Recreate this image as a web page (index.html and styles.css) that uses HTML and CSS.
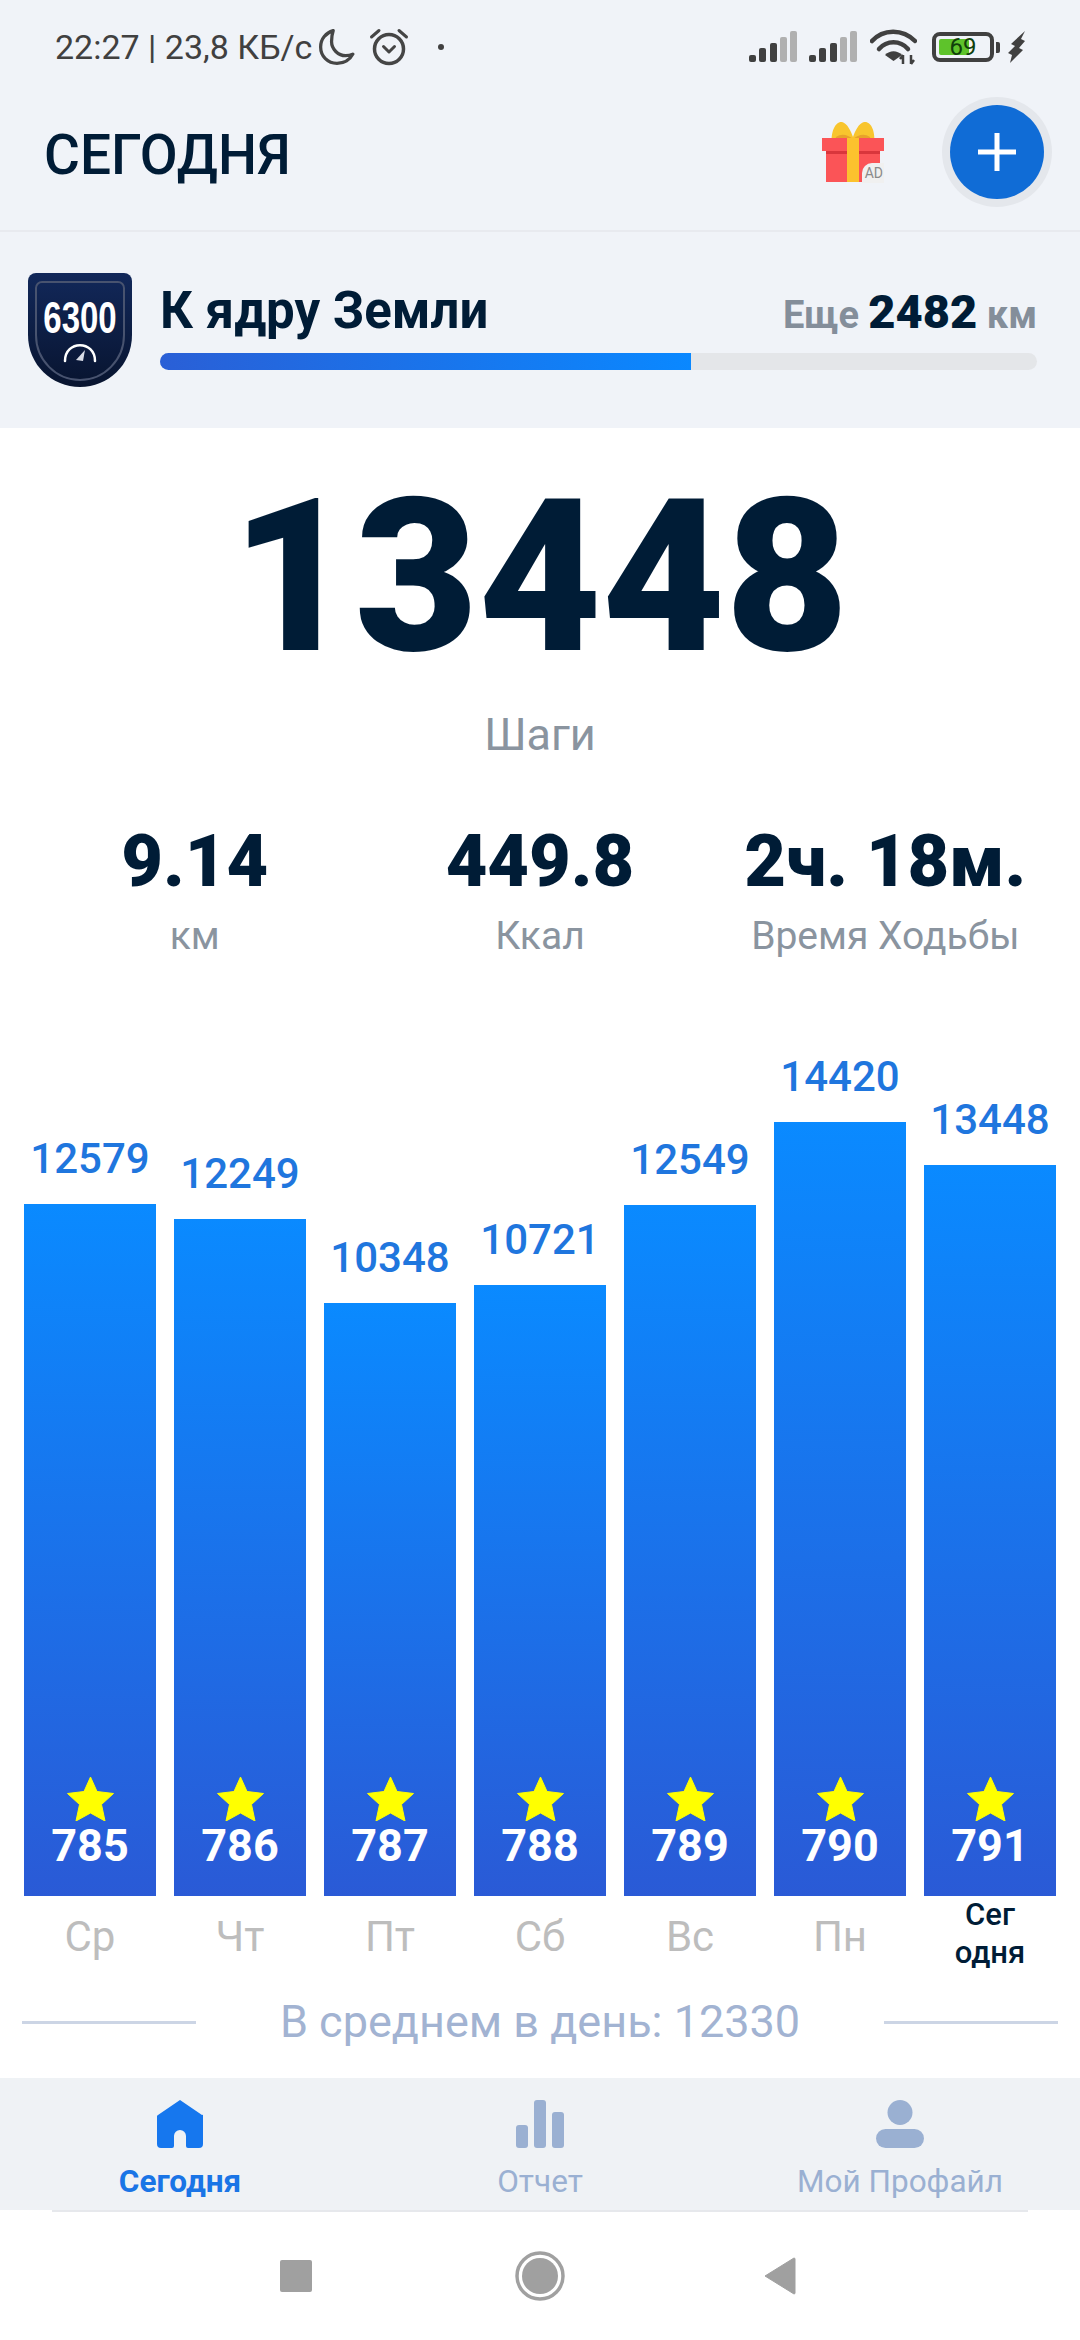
FILE: index.html
```html
<!DOCTYPE html>
<html lang="ru">
<head>
    <meta charset="UTF-8">
    <meta name="viewport" content="width=device-width, initial-scale=1.0">
    <title>Сегодня</title>
    <link rel="stylesheet" href="styles.css">
</head>
<body>
    <!-- status bar -->
    <div class="statusbar">
        <div class="status-left">
            <span class="status-text">22:27 | 23,8 КБ/с</span>
            <svg class="ic-moon" width="36" height="36" viewBox="2 2 33 33"><path d="M15 3.500C8.500 5.500 3.500 11 3.500 18.500 3.500 27 10 33.500 18.500 33.500 25 33.500 30.500 30 33 25 31 26 29 26.500 26.500 26.500 19.500 26.500 13.500 20.500 13.500 13.500 13.500 10 14 6.500 15 3.500Z" fill="none" stroke="#454545" stroke-width="3" stroke-linejoin="round"/></svg>
            <svg class="ic-alarm" width="40" height="38" viewBox="0 0 40 38"><circle cx="20" cy="21" r="14.500" fill="none" stroke="#454545" stroke-width="3.500"/><path d="M14.500 18.500 20 24l5.500-5.500" fill="none" stroke="#454545" stroke-width="3" stroke-linecap="round" stroke-linejoin="round"/><path d="M2.500 9 10 2.500M37.500 9 30 2.500" fill="none" stroke="#454545" stroke-width="3" stroke-linecap="round"/></svg>
            <span class="status-dot"></span>
        </div>
        <div class="status-right">
            <svg width="48" height="32" viewBox="0 0 48 32"><rect x="0" y="24" width="7" height="7" rx="2" fill="#404040"/><rect x="10" y="17" width="7" height="14" rx="2" fill="#404040"/><rect x="21" y="12" width="7" height="19" rx="2" fill="#404040"/><rect x="31" y="6" width="7" height="25" rx="2" fill="#b0b0b0"/><rect x="41" y="0" width="7" height="31" rx="2" fill="#b0b0b0"/></svg>
            <svg width="48" height="32" viewBox="0 0 48 32"><rect x="0" y="24" width="7" height="7" rx="2" fill="#404040"/><rect x="10" y="17" width="7" height="14" rx="2" fill="#404040"/><rect x="21" y="12" width="7" height="19" rx="2" fill="#404040"/><rect x="31" y="6" width="7" height="25" rx="2" fill="#b0b0b0"/><rect x="41" y="0" width="7" height="31" rx="2" fill="#b0b0b0"/></svg>
            <svg class="ic-wifi" width="47" height="36" viewBox="0 0 47 36"><path d="M2 12C13-.5 33-.5 45 12" fill="none" stroke="#404040" stroke-width="4.500" stroke-linecap="round"/><path d="M9 20C17 11 30 11 38 20" fill="none" stroke="#404040" stroke-width="4.500" stroke-linecap="round"/><path d="M23.500 32 15 26C20 21 27 21 32 26Z" fill="#404040"/><path d="M33 26v9M33 26l-3 4M41 35v-9M41 35l3-4" fill="none" stroke="#404040" stroke-width="2.500"/></svg>
            <div class="battery">
                <div class="battery-body">
                    <div class="battery-fill"></div>
                    <span class="battery-num">69</span>
                </div>
                <div class="battery-tip"></div>
            </div>
            <svg class="ic-bolt" width="18" height="32" viewBox="0 0 18 32"><path d="M17 0 3 13l4 2-7 7 4 2-2 8 13-13-4-2 6-7-4-2Z" fill="#404040"/></svg>
        </div>
    </div>

    <!-- app bar -->
    <header class="appbar">
        <h1 class="page-title">СЕГОДНЯ</h1>
        <div class="gift">
            <svg width="62" height="62" viewBox="0 0 62 62">
                <path d="M10 25 C8 10 14 0 20 1 C25 2 29 10 31 16 C33 10 37 2 42 1 C49 0 54 10 52 25Z" fill="#f8c52e"/>
                <path d="M14 16 C20 12 26 14 31 18 C36 14 42 12 48 16 L50 25 H12Z" fill="#e8a22a"/>
                <rect x="0" y="17" width="62" height="13" fill="#fb5457"/>
                <rect x="4" y="30" width="54" height="31" fill="#fb5457"/>
                <rect x="4" y="30" width="54" height="3" fill="#d9363c"/>
                <rect x="25" y="17" width="12" height="44" fill="#fcc22e"/>
            </svg>
            <span class="gift-ad">AD</span>
        </div>
        <button class="add-btn">
            <svg width="40" height="40" viewBox="0 0 40 40"><path d="M20 1v38M1 20h38" stroke="#fff" stroke-width="5"/></svg>
        </button>
    </header>

    <!-- goal -->
    <section class="goal">
        <svg class="badge" width="104" height="114" viewBox="0 0 104 114">
            <defs>
                <linearGradient id="badgeBg" x1="0" y1="0" x2="0" y2="1">
                    <stop offset="0" stop-color="#12285a"/>
                    <stop offset="1" stop-color="#08142f"/>
                </linearGradient>
            </defs>
            <path d="M8 0H96a8 8 0 0 1 8 8V62C104 92 80 114 52 114 24 114 0 92 0 62V8A8 8 0 0 1 8 0Z" fill="url(#badgeBg)"/>
            <path d="M14 9H90a6 6 0 0 1 6 6V62C96 87 76 107 52 107 28 107 8 87 8 62V15A6 6 0 0 1 14 9Z" fill="none" stroke="#48536f" stroke-width="2"/>
            <text class="badge-num" text-anchor="middle" transform="translate(52 60) scale(1 1.37)">6300</text>
            <path d="M37 88C37 67 67 67 67 88" fill="none" stroke="#fff" stroke-width="2.500" stroke-linecap="round"/>
            <path d="M48 87 57 77 55 88Z" fill="#d8dce6"/>
        </svg>
        <div class="goal-info">
            <div class="goal-head">
                <span class="goal-name">К ядру Земли</span>
                <span class="goal-left">Еще <b>2482</b> км</span>
            </div>
            <div class="goal-track"><div class="goal-fill"></div></div>
        </div>
    </section>

    <main class="main">
        <div class="steps">13448</div>
        <div class="steps-label">Шаги</div>

        <div class="stats">
            <div class="stat"><div class="stat-value">9.14</div><div class="stat-label">км</div></div>
            <div class="stat"><div class="stat-value">449.8</div><div class="stat-label">Ккал</div></div>
            <div class="stat"><div class="stat-value">2ч. 18м.</div><div class="stat-label">Время Ходьбы</div></div>
        </div>

        <!-- chart -->
        <div class="chart">
            <div class="col">
                <div class="col-value">12579</div>
                <div class="bar" style="height: 692px"><svg class="star" viewBox="0 0 46 44"><use href="#star"/></svg><span class="bar-num">785</span></div>
                <div class="col-day">Ср</div>
            </div>
            <div class="col">
                <div class="col-value">12249</div>
                <div class="bar" style="height: 677px"><svg class="star" viewBox="0 0 46 44"><use href="#star"/></svg><span class="bar-num">786</span></div>
                <div class="col-day">Чт</div>
            </div>
            <div class="col">
                <div class="col-value">10348</div>
                <div class="bar" style="height: 593px"><svg class="star" viewBox="0 0 46 44"><use href="#star"/></svg><span class="bar-num">787</span></div>
                <div class="col-day">Пт</div>
            </div>
            <div class="col">
                <div class="col-value">10721</div>
                <div class="bar" style="height: 611px"><svg class="star" viewBox="0 0 46 44"><use href="#star"/></svg><span class="bar-num">788</span></div>
                <div class="col-day">Сб</div>
            </div>
            <div class="col">
                <div class="col-value">12549</div>
                <div class="bar" style="height: 691px"><svg class="star" viewBox="0 0 46 44"><use href="#star"/></svg><span class="bar-num">789</span></div>
                <div class="col-day">Вс</div>
            </div>
            <div class="col">
                <div class="col-value">14420</div>
                <div class="bar" style="height: 774px"><svg class="star" viewBox="0 0 46 44"><use href="#star"/></svg><span class="bar-num">790</span></div>
                <div class="col-day">Пн</div>
            </div>
            <div class="col">
                <div class="col-value">13448</div>
                <div class="bar" style="height: 731px"><svg class="star" viewBox="0 0 46 44"><use href="#star"/></svg><span class="bar-num">791</span></div>
                <div class="col-day today">Сег<br>одня</div>
            </div>
        </div>

        <div class="average">
            <span class="average-line"></span>
            <span class="average-text">В среднем в день: 12330</span>
            <span class="average-line"></span>
        </div>
    </main>

    <!-- tabs -->
    <nav class="tabs">
        <a class="tab active" href="#">
            <svg width="46" height="48" viewBox="0 0 46 48"><path d="M23 0 45 15a1 1 0 0 1 1 2V44a4 4 0 0 1-4 4H31a2 2 0 0 1-2-2V36a6 6 0 0 0-12 0V46a2 2 0 0 1-2 2H4a4 4 0 0 1-4-4V17a2 2 0 0 1 1-2Z" fill="#1677ee"/></svg>
            <span>Сегодня</span>
        </a>
        <a class="tab" href="#">
            <svg width="48" height="48" viewBox="0 0 48 48"><rect x="0" y="25" width="12" height="23" rx="3" fill="#9ab0d2"/><rect x="18" y="0" width="12" height="48" rx="3" fill="#9ab0d2"/><rect x="36" y="12" width="12" height="36" rx="3" fill="#9ab0d2"/></svg>
            <span>Отчет</span>
        </a>
        <a class="tab" href="#">
            <svg width="48" height="48" viewBox="0 0 48 48"><circle cx="24" cy="12.500" r="12.500" fill="#9ab0d2"/><rect x="0" y="29" width="48" height="19" rx="9.500" fill="#9ab0d2"/></svg>
            <span>Мой Профайл</span>
        </a>
    </nav>

    <!-- system nav -->
    <div class="nav-line"></div>
    <div class="sysnav">
        <span class="sys-square"></span>
        <svg class="sys-home" width="50" height="50" viewBox="0 0 50 50"><circle cx="25" cy="25" r="23" fill="none" stroke="#a0a0a0" stroke-width="3.500"/><circle cx="25" cy="25" r="18" fill="#a0a0a0"/></svg>
        <svg width="32" height="38" viewBox="0 0 32 38"><path d="M30 1 1 19 30 37a1 1 0 0 0 1-1V2a1 1 0 0 0-1-1Z" fill="#a0a0a0" stroke="#a0a0a0" stroke-linejoin="round"/></svg>
    </div>

    <svg class="defs" width="0" height="0"><defs><path id="star" d="M23 0 29.500 14.500 46 16.500 34 27.500 37.500 44 23 36 8.500 44 12 27.500 0 16.500 16.500 14.500Z" fill="#ffff00" stroke="#ffff00" stroke-linejoin="round"/></defs></svg>
</body>
</html>
```

FILE: styles.css
```css
* {
    margin: 0;
    padding: 0;
    box-sizing: border-box;
    font-family: Roboto, "Liberation Sans", sans-serif;
}

body {
    width: 1080px;
    height: 2340px;
    background-color: #fff;
    overflow: hidden;
    position: relative;
}

.defs {
    position: absolute;
}

/* status bar */
.statusbar {
    height: 94px;
    background-color: #f0f3f8;
    display: flex;
    justify-content: space-between;
    align-items: center;
    padding: 0 54px 0 55px;
}

.status-left,
.status-right {
    display: flex;
    align-items: center;
}

.status-text {
    font-size: 34px;
    color: #404040;
}

.ic-moon {
    margin-left: 7px;
}

.ic-alarm {
    margin-left: 14px;
}

.status-dot {
    width: 6px;
    height: 6px;
    border-radius: 50%;
    background-color: #404040;
    margin-left: 29px;
}

.status-right {
    gap: 12px;
}

.ic-wifi {
    margin-left: 1px;
}

.battery {
    display: flex;
    align-items: center;
    gap: 2px;
    margin-left: 3px;
}

.battery-body {
    width: 62px;
    height: 30px;
    border: 4px solid #404040;
    border-radius: 8px;
    position: relative;
    padding: 3px;
}

.battery-fill {
    width: 62%;
    height: 100%;
    background-color: #5ec32b;
    border-radius: 2px;
}

.battery-num {
    position: absolute;
    left: 0;
    right: 0;
    top: -4px;
    text-align: center;
    font-size: 24px;
    line-height: 30px;
    color: #10400a;
}

.battery-tip {
    width: 4px;
    height: 11px;
    background-color: #404040;
    border-radius: 0 2px 2px 0;
}

.ic-bolt {
    margin-left: -4px;
}

/* app bar */
.appbar {
    height: 138px;
    background-color: #f0f3f8;
    border-bottom: 2px solid #e8eaef;
    display: flex;
    align-items: center;
    padding: 0 36px 20px 44px;
}

.page-title {
    font-size: 55px;
    font-weight: 500;
    color: #001c36;
    flex: 1;
    padding-top: 5px;
}

.gift {
    position: relative;
    width: 62px;
    height: 62px;
    margin-right: 66px;
}

.gift-ad {
    position: absolute;
    right: 0;
    bottom: 0;
    background-color: #f0f0f0;
    color: #8a8a8a;
    font-size: 14px;
    line-height: 20px;
    padding: 0 1px 0 3px;
    border-radius: 10px 0 0 0;
}

.add-btn {
    width: 94px;
    height: 94px;
    border: none;
    border-radius: 50%;
    background-color: #106cd6;
    box-shadow: 0 0 0 8px #e4e7ec;
    display: flex;
    align-items: center;
    justify-content: center;
}

/* goal */
.goal {
    height: 196px;
    background-color: #f0f3f8;
    display: flex;
    gap: 28px;
    padding: 41px 43px 0 28px;
}

.badge {
    flex-shrink: 0;
}

.badge-num {
    font-family: "Liberation Sans", sans-serif;
    font-size: 33px;
    font-weight: 700;
    fill: #fff;
}

.goal-info {
    flex: 1;
    padding-top: 8px;
}

.goal-head {
    display: flex;
    justify-content: space-between;
    align-items: baseline;
    height: 57px;
}

.goal-name {
    font-size: 51px;
    font-weight: 700;
    color: #001c36;
}

.goal-left {
    font-size: 38px;
    font-weight: 700;
    color: #848e9a;
}

.goal-left b {
    font-size: 47px;
    color: #001c36;
}

.goal-track {
    height: 17px;
    margin-top: 15px;
    background-color: #e4e6e9;
    border-radius: 9px;
    overflow: hidden;
}

.goal-fill {
    width: 531px;
    height: 100%;
    background: linear-gradient(to right, #2a5fd6, #0a88ff);
}

/* main */
.main {
    height: 1650px;
    background-color: #fff;
}

.steps {
    font-size: 213px;
    font-weight: 900;
    line-height: 212px;
    color: #001c36;
    text-align: center;
    padding-top: 43px;
    height: 252px;
}

.steps-label {
    font-size: 45px;
    line-height: 50px;
    color: #8a949f;
    text-align: center;
    margin-top: 30px;
}

.stats {
    display: grid;
    grid-template-columns: repeat(3, 1fr);
    padding: 0 22px;
    margin-top: 60px;
}

.stat {
    text-align: center;
}

.stat-value {
    font-size: 72px;
    font-weight: 900;
    line-height: 84px;
    color: #001c36;
}

.stat-label {
    font-size: 39px;
    line-height: 46px;
    color: #8a949f;
    margin-top: 9px;
}

/* chart */
.chart {
    display: flex;
    align-items: flex-end;
    gap: 18px;
    padding: 0 24px;
    margin-top: 94px;
}

.col {
    flex: 1;
    min-width: 0;
    display: flex;
    flex-direction: column;
    align-items: center;
}

.col-value {
    font-size: 42px;
    line-height: 48px;
    font-weight: 500;
    color: #1f76de;
    margin-bottom: 21px;
}

.bar {
    width: 100%;
    background: linear-gradient(to bottom, #0a8aff, #2a5ad6);
    display: flex;
    flex-direction: column;
    align-items: center;
    justify-content: flex-end;
    padding-bottom: 28px;
}

.star {
    width: 47px;
    height: 44px;
}

.bar-num {
    font-size: 45px;
    line-height: 44px;
    font-weight: 700;
    color: #fff;
    margin-top: 3px;
}

.col-day {
    height: 94px;
    padding-top: 16px;
    font-size: 42px;
    line-height: 50px;
    color: #bdbdbd;
    text-align: center;
}

.col-day.today {
    padding-top: 0;
    font-size: 31px;
    line-height: 38px;
    font-weight: 500;
    color: #001c36;
}

.average {
    display: flex;
    align-items: center;
    justify-content: space-between;
    padding: 0 22px 0 22px;
    margin-top: 7px;
}

.average-line {
    width: 174px;
    height: 3px;
    background-color: #ccd5e5;
}

.average-text {
    font-size: 45px;
    line-height: 50px;
    color: #a2b3d2;
}

/* tabs */
.tabs {
    height: 132px;
    background-color: #eff2f5;
    display: grid;
    grid-template-columns: repeat(3, 1fr);
    padding-top: 22px;
}

.tab {
    display: flex;
    flex-direction: column;
    align-items: center;
    text-decoration: none;
    font-size: 31.5px;
    line-height: 36px;
    color: #9ab0d2;
}

.tab span {
    margin-top: 16px;
}

.tab.active {
    color: #1a75e6;
    font-weight: 700;
}

/* system nav */
.nav-line {
    height: 2px;
    margin: 0 52px;
    background-color: #e6e8ec;
}

.sysnav {
    height: 128px;
    display: flex;
    align-items: center;
    padding-left: 280px;
}

.sys-square {
    width: 32px;
    height: 32px;
    background-color: #a0a0a0;
    border-radius: 2px;
}

.sys-home {
    margin: 0 199px 0 203px;
}
```
